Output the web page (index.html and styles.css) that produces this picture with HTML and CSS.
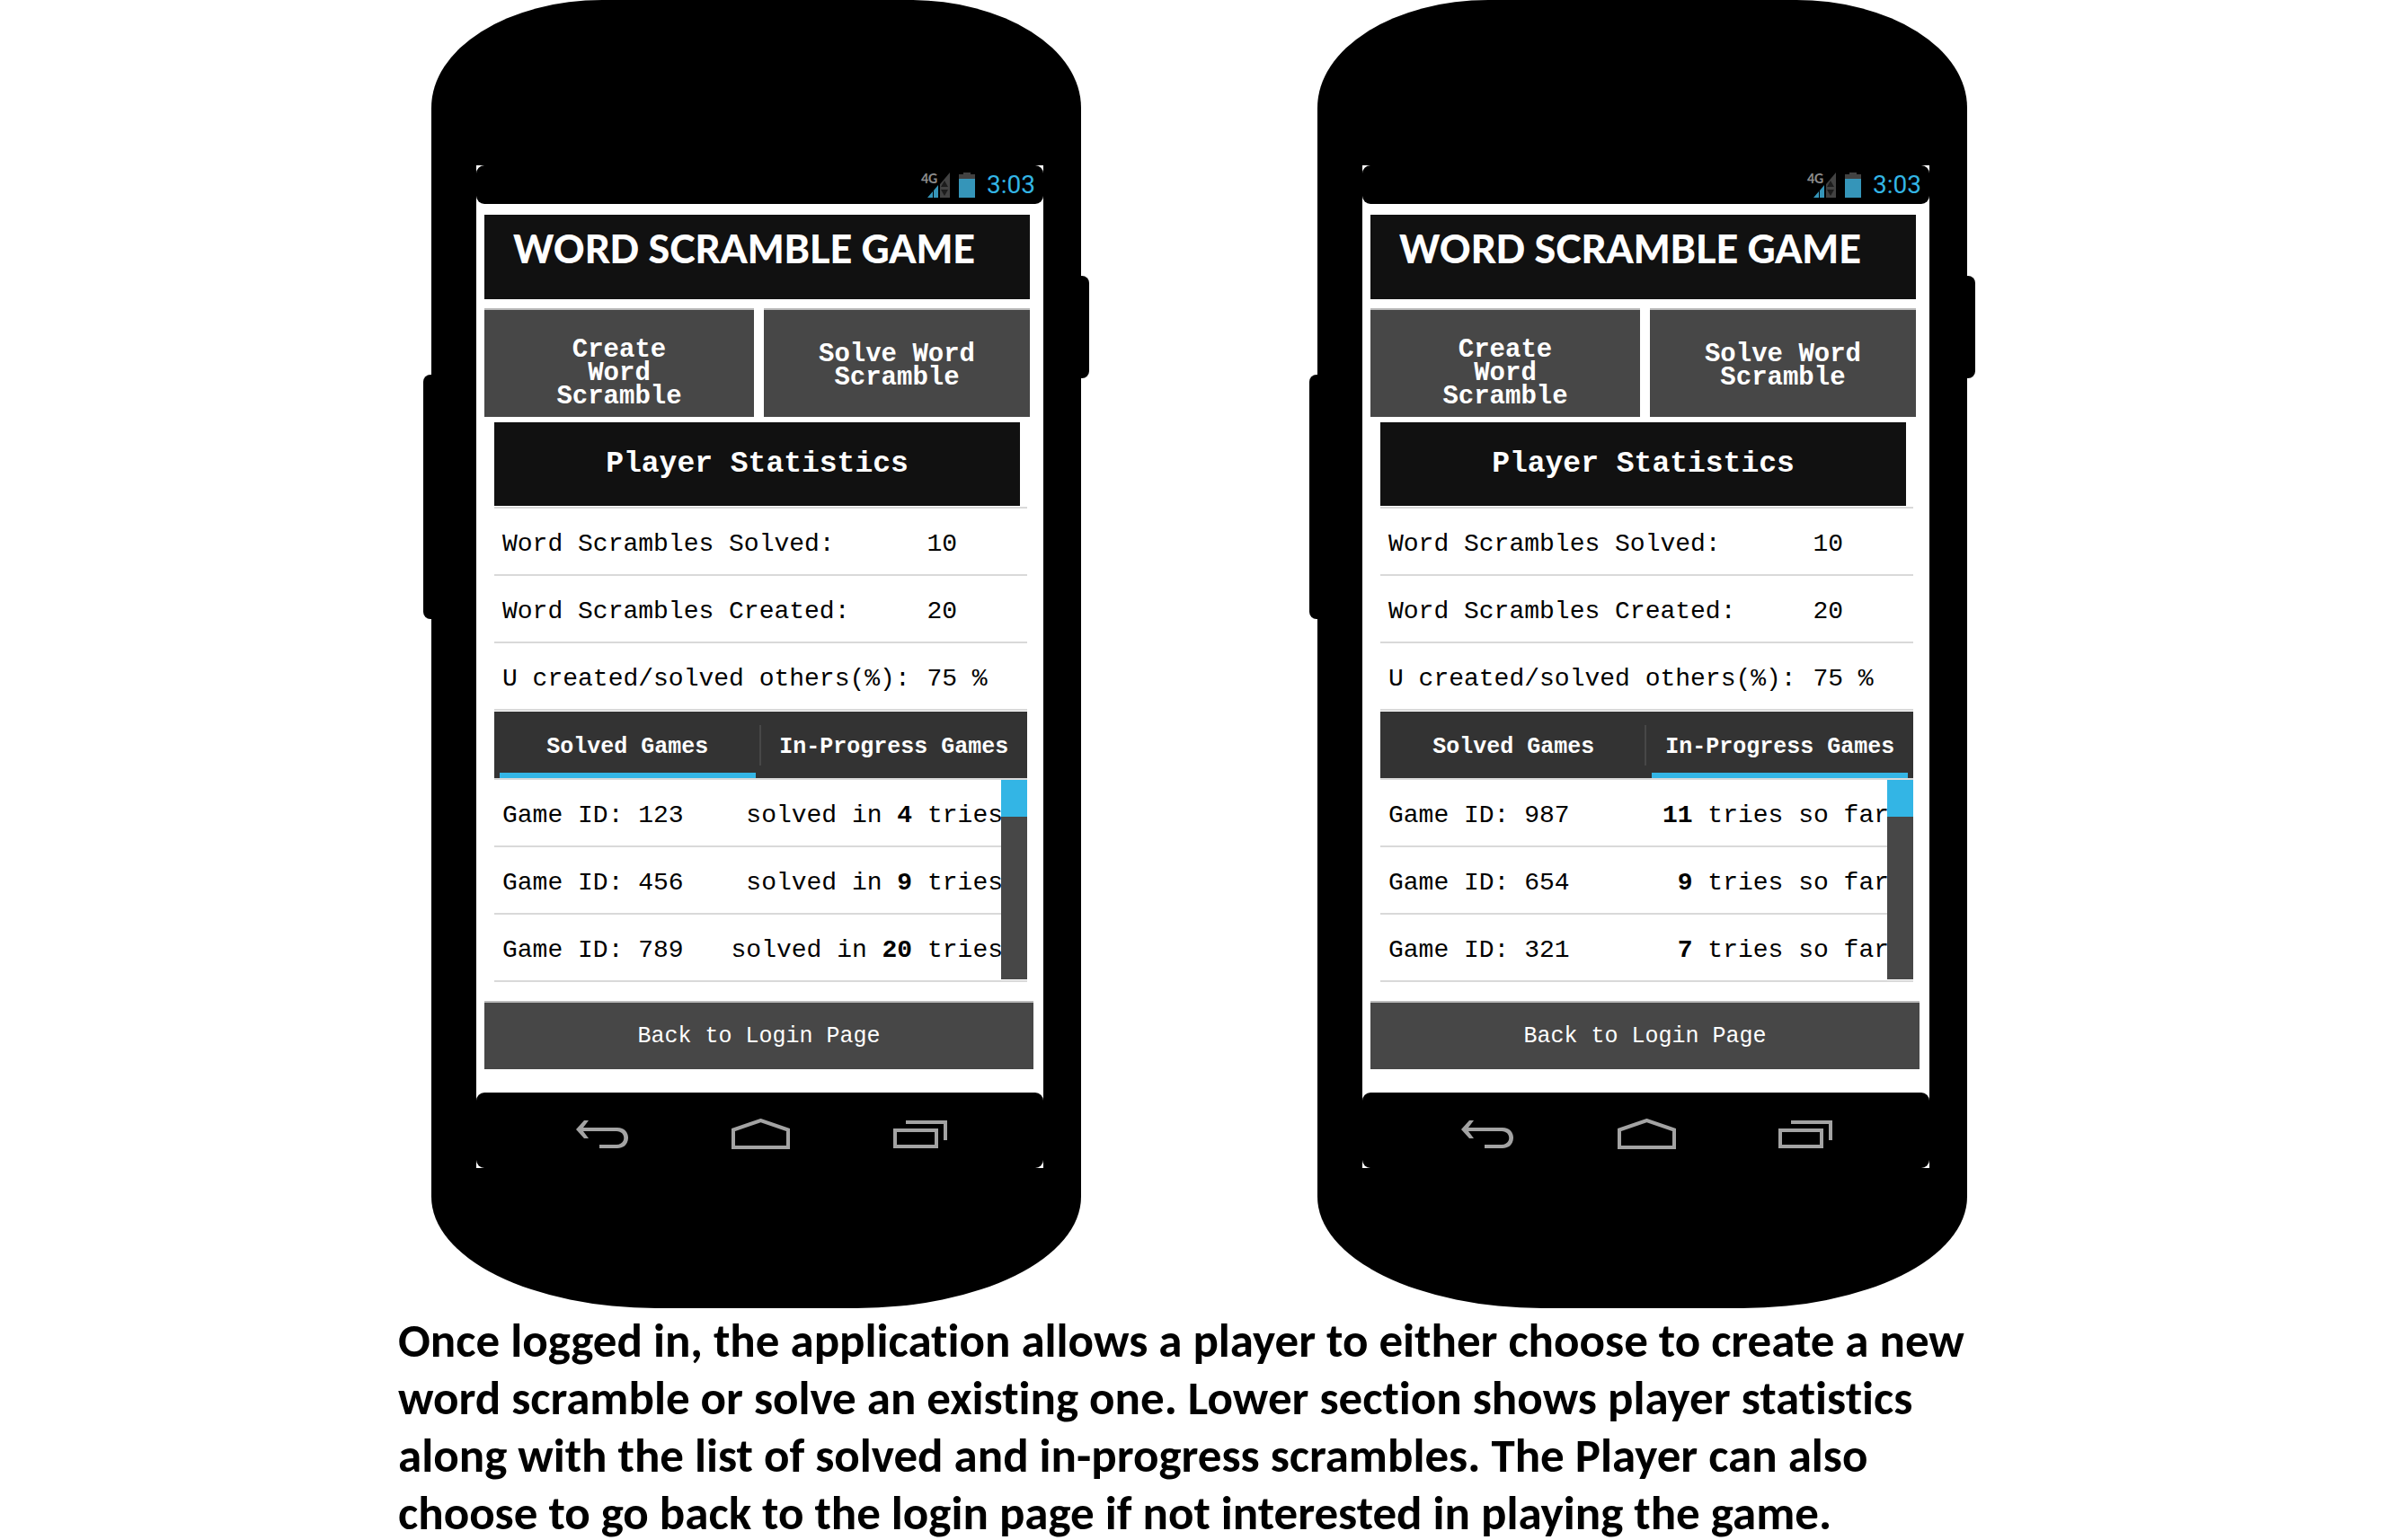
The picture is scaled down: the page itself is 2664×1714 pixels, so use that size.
FILE: index.html
```html
<!DOCTYPE html>
<html lang="en">
<head>
<meta charset="utf-8">
<title>Word Scramble Game</title>
<link rel="stylesheet" href="styles.css">
</head>
<body>
<svg class="sprite" aria-hidden="true">
  <symbol id="signal" viewBox="0 0 32 28">
    <path d="M32 0V28H21V13Z" fill="#424242"/>
    <path d="M26 9l4 7h-8zM22 19h8l-4 7z" fill="#1c1c1c"/>
    <path d="M7 28l6-7v7zM14 20l5-6v14h-5z" fill="#3595b9"/>
  </symbol>
  <symbol id="battery" viewBox="0 0 18 28">
    <path d="M0 2h5V0h8v2h5v5H0z" fill="#424242"/>
    <path d="M0 7h18v21H0z" fill="#3595b9"/>
  </symbol>
  <symbol id="back" viewBox="0 0 58 31">
    <path d="M0 10L9 0h5L8 8h38c16 0 16 23 0 23H26v-4h19c11 0 11-15 0-15H8l6 8H9z" fill="#a3a3a3"/>
  </symbol>
  <symbol id="home" viewBox="0 0 65 34">
    <path d="M2 32V12.500L32.500 2 63 12.500V32z" fill="none" stroke="#a3a3a3" stroke-width="4"/>
  </symbol>
  <symbol id="recent" viewBox="0 0 60 31">
    <path d="M2 11H48V29H2zM14 2H58V22" fill="none" stroke="#a3a3a3" stroke-width="4"/>
  </symbol>
</svg>
<main class="page">
  <div class="phones">
    <section class="phone">
      <div class="screen">
        <div class="status">
          <span class="network"><span class="network-type">4G</span><svg class="signal"><use href="#signal"/></svg></span>
          <svg class="battery"><use href="#battery"/></svg>
          <time class="clock">3:03</time>
        </div>
        <div class="app">
          <h1 class="title">WORD SCRAMBLE GAME</h1>
          <div class="actions">
            <button class="action action-create" type="button">Create<br>Word<br>Scramble</button>
            <button class="action" type="button">Solve Word<br>Scramble</button>
          </div>
          <div class="panel">
            <h2 class="heading">Player Statistics</h2>
            <table class="list stats">
              <tr><th scope="row">Word Scrambles Solved:</th><td>10</td></tr>
              <tr><th scope="row">Word Scrambles Created:</th><td>20</td></tr>
              <tr><th scope="row">U created/solved others(%):</th><td>75 %</td></tr>
            </table>
            <div class="tabs" role="tablist">
              <button class="tab tab-active" type="button" role="tab" aria-selected="true">Solved Games</button>
              <button class="tab" type="button" role="tab" aria-selected="false">In-Progress Games</button>
            </div>
            <div class="scroller">
              <table class="list games">
                <tr><th scope="row">Game ID: 123</th><td>solved in <b>4</b> tries</td></tr>
                <tr><th scope="row">Game ID: 456</th><td>solved in <b>9</b> tries</td></tr>
                <tr><th scope="row">Game ID: 789</th><td>solved in <b>20</b> tries</td></tr>
              </table>
              <div class="scrollbar"></div>
            </div>
          </div>
          <button class="login" type="button">Back to Login Page</button>
        </div>
        <nav class="keys">
          <button class="key" type="button" aria-label="Back"><svg class="icon-back"><use href="#back"/></svg></button>
          <button class="key" type="button" aria-label="Home"><svg class="icon-home"><use href="#home"/></svg></button>
          <button class="key" type="button" aria-label="Recent apps"><svg class="icon-recent"><use href="#recent"/></svg></button>
        </nav>
      </div>
    </section>
    <section class="phone">
      <div class="screen">
        <div class="status">
          <span class="network"><span class="network-type">4G</span><svg class="signal"><use href="#signal"/></svg></span>
          <svg class="battery"><use href="#battery"/></svg>
          <time class="clock">3:03</time>
        </div>
        <div class="app">
          <h1 class="title">WORD SCRAMBLE GAME</h1>
          <div class="actions">
            <button class="action action-create" type="button">Create<br>Word<br>Scramble</button>
            <button class="action" type="button">Solve Word<br>Scramble</button>
          </div>
          <div class="panel">
            <h2 class="heading">Player Statistics</h2>
            <table class="list stats">
              <tr><th scope="row">Word Scrambles Solved:</th><td>10</td></tr>
              <tr><th scope="row">Word Scrambles Created:</th><td>20</td></tr>
              <tr><th scope="row">U created/solved others(%):</th><td>75 %</td></tr>
            </table>
            <div class="tabs" role="tablist">
              <button class="tab" type="button" role="tab" aria-selected="false">Solved Games</button>
              <button class="tab tab-active" type="button" role="tab" aria-selected="true">In-Progress Games</button>
            </div>
            <div class="scroller">
              <table class="list games">
                <tr><th scope="row">Game ID: 987</th><td><b>11</b> tries so far</td></tr>
                <tr><th scope="row">Game ID: 654</th><td><b>9</b> tries so far</td></tr>
                <tr><th scope="row">Game ID: 321</th><td><b>7</b> tries so far</td></tr>
              </table>
              <div class="scrollbar"></div>
            </div>
          </div>
          <button class="login" type="button">Back to Login Page</button>
        </div>
        <nav class="keys">
          <button class="key" type="button" aria-label="Back"><svg class="icon-back"><use href="#back"/></svg></button>
          <button class="key" type="button" aria-label="Home"><svg class="icon-home"><use href="#home"/></svg></button>
          <button class="key" type="button" aria-label="Recent apps"><svg class="icon-recent"><use href="#recent"/></svg></button>
        </nav>
      </div>
    </section>
  </div>
  <p class="caption">Once logged in, the application allows a player to either choose to create a new<br>
  word scramble or solve an existing one. Lower section shows player statistics<br>
  along with the list of solved and in-progress scrambles. The Player can also<br>
  choose to go back to the login page if not interested in playing the game.</p>
</main>
</body>
</html>
```

FILE: styles.css
```css
* { box-sizing: border-box; }

body {
  margin: 0;
  background: #fff;
  color: #000;
  font-family: "Liberation Mono", "Courier New", monospace;
}

button {
  margin: 0;
  padding: 0;
  border: 0;
  background: none;
  color: #fff;
  font-family: inherit;
}

.sprite { display: none; }

.page { padding: 0 16.63%; }

.phones {
  display: flex;
  gap: 263px;
  padding: 0 32px 0 37px;
}

/* Handset */
.phone {
  position: relative;
  flex: 1 1 0;
  min-width: 0;
  padding: 184px 42px 156px 50px;
  background: #000;
  border-radius: 190px 190px 250px 250px / 120px 120px 124px 124px;
}

.phone::before,
.phone::after {
  content: "";
  position: absolute;
  width: 9px;
  background: #000;
}

.phone::before {
  top: 417px;
  left: -9px;
  height: 272px;
  border-radius: 8px 0 0 8px;
}

.phone::after {
  top: 307px;
  right: -9px;
  height: 114px;
  border-radius: 0 8px 8px 0;
}

.screen { background: #fff; }

.status {
  display: flex;
  align-items: center;
  justify-content: flex-end;
  gap: 10px;
  height: 43px;
  padding-right: 9px;
  border-radius: 9px;
  background: #000;
}

.network { position: relative; }

.network-type {
  position: absolute;
  left: 0;
  top: 0;
  color: #8c8c8c;
  font: bold 16px/14px Carlito, sans-serif;
}

.signal {
  display: block;
  width: 32px;
  height: 28px;
}

.battery { width: 18px; height: 28px; }

.clock {
  padding-left: 3px;
  color: #33b5e5;
  font: 28px/40px Roboto, sans-serif;
}

/* Game screen */
.app { padding: 12px 15px 26px 9px; }

.title {
  height: 94px;
  margin: 0 0 10px;
  padding: 8px 0 0 32px;
  background: #111;
  color: #fff;
  font: 900 43px/60px Lato, sans-serif;
  white-space: nowrap;
}

.actions {
  display: grid;
  grid-template-columns: 300fr 296fr;
  gap: 11px;
  margin-bottom: 6px;
}

.action {
  height: 121px;
  padding-top: 6px;
  border-top: 2px solid #bbb;
  background: #474747;
  font-size: 29px;
  font-weight: bold;
  line-height: 26px;
}

.action-create { padding-top: 22px; }

.panel {
  margin-right: 3px;
  padding-left: 11px;
}

.heading {
  margin: 0 8px 1px 0;
  background: #111;
  color: #fff;
  font-size: 33px;
  line-height: 93px;
  text-align: center;
}

.list {
  width: 100%;
  border-spacing: 0;
  border-top: 2px solid #d9d9d9;
  font-size: 28px;
  white-space: nowrap;
}

.list th,
.list td {
  height: 75px;
  padding: 6px 0 0 9px;
  border-bottom: 2px solid #d9d9d9;
  font-weight: normal;
  text-align: left;
}

.stats { margin-bottom: 1px; }

.stats th { width: 80%; }

.stats td { padding-left: 7px; }

.games td {
  padding-right: 27px;
  text-align: right;
}

.tabs {
  display: grid;
  grid-template-columns: 1fr 1fr;
  background: #333;
}

.tab {
  position: relative;
  height: 74px;
  padding-top: 5px;
  font-size: 25px;
  font-weight: bold;
}

.tab + .tab::before {
  content: "";
  position: absolute;
  left: -2px;
  top: 15px;
  width: 2px;
  height: 45px;
  background: #474747;
}

.tab-active::after {
  content: "";
  position: absolute;
  left: 6px;
  right: 6px;
  bottom: 0;
  height: 6px;
  background: #33b5e5;
}

.scroller { position: relative; }

.scrollbar {
  position: absolute;
  top: 2px;
  right: 0;
  bottom: 3px;
  width: 29px;
  border-top: 41px solid #33b5e5;
  background: #474747;
}

.login {
  display: block;
  width: calc(100% + 4px);
  height: 76px;
  margin-top: 21px;
  border-top: 2px solid #bbb;
  background: #474747;
  font-size: 25px;
}

/* System keys */
.keys {
  display: grid;
  grid-template-columns: 1fr 1fr 1fr;
  height: 84px;
  padding: 8px 49px 0 51px;
  border-radius: 9px;
  background: #000;
}

.key {
  display: flex;
  align-items: center;
  justify-content: center;
}

.icon-back { width: 58px; height: 31px; }
.icon-home { width: 65px; height: 34px; }
.icon-recent { width: 60px; height: 31px; }

.caption {
  margin: 0;
  padding-top: 4px;
  font: bold 53px/64px Carlito, Lato, sans-serif;
  font-variant-ligatures: none;
  white-space: nowrap;
}
```
